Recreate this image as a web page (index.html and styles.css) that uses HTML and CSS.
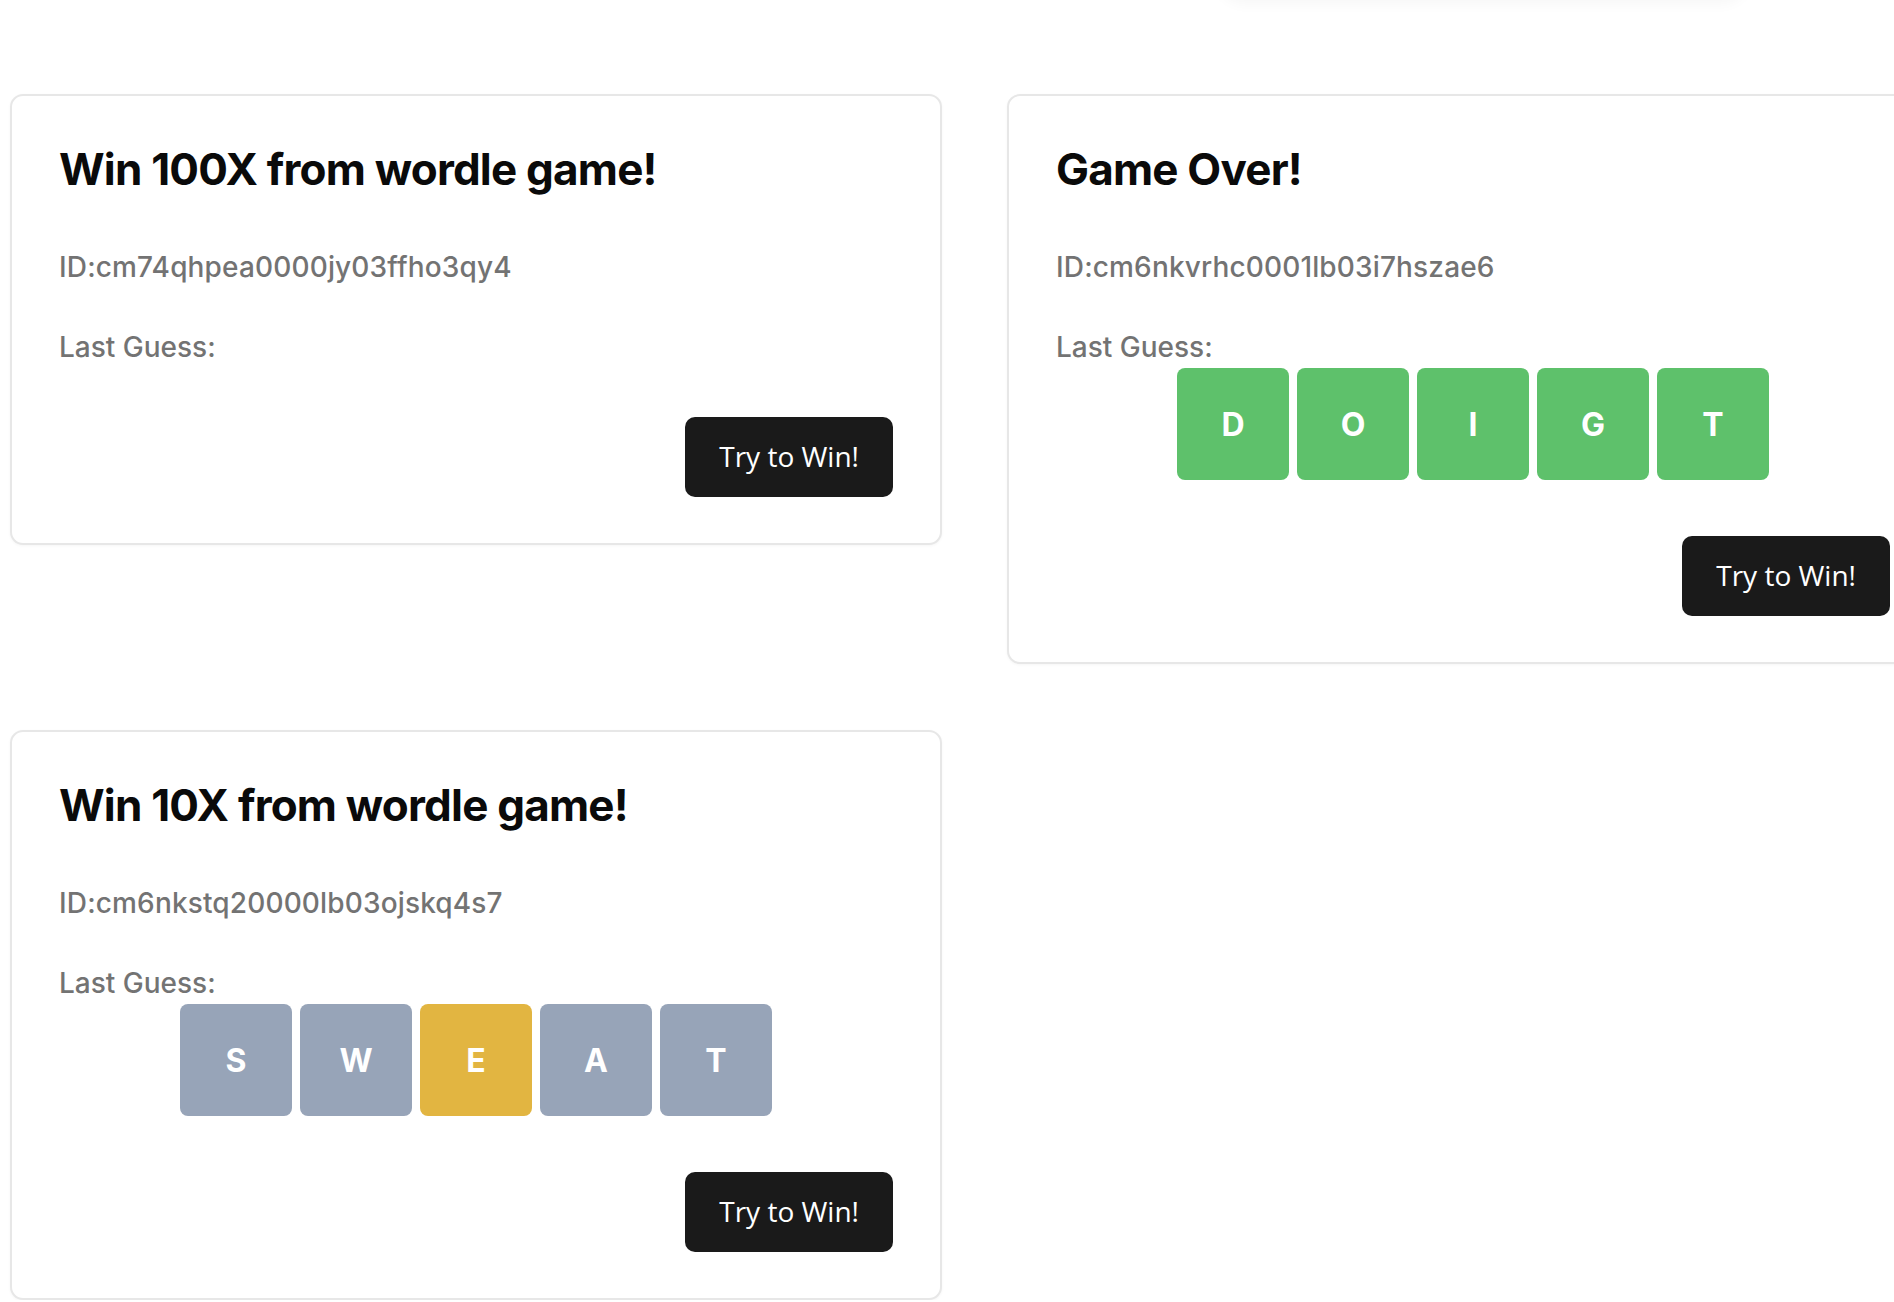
FILE: index.html
```html
<!DOCTYPE html>
<html lang="en">
<head>
<meta charset="utf-8">
<title>Wordle games</title>
<link rel="stylesheet" href="styles.css">
</head>
<body>
<div class="topbar-shadow"></div>
<main class="games">
  <section class="card">
    <h2 class="card-title">Win 100X from wordle game!</h2>
    <p class="card-id">ID:cm74qhpea0000jy03ffho3qy4</p>
    <p class="card-label">Last Guess:</p>
    <div class="card-actions card-actions-empty">
      <button class="btn-try">Try to Win!</button>
    </div>
  </section>

  <section class="card">
    <h2 class="card-title">Game Over!</h2>
    <p class="card-id">ID:cm6nkvrhc0001lb03i7hszae6</p>
    <p class="card-label">Last Guess:</p>
    <div class="tiles">
      <span class="tile tile-green">D</span>
      <span class="tile tile-green">O</span>
      <span class="tile tile-green">I</span>
      <span class="tile tile-green">G</span>
      <span class="tile tile-green">T</span>
    </div>
    <div class="card-actions">
      <button class="btn-try">Try to Win!</button>
    </div>
  </section>

  <section class="card">
    <h2 class="card-title">Win 10X from wordle game!</h2>
    <p class="card-id">ID:cm6nkstq20000lb03ojskq4s7</p>
    <p class="card-label">Last Guess:</p>
    <div class="tiles">
      <span class="tile tile-gray">S</span>
      <span class="tile tile-gray">W</span>
      <span class="tile tile-yellow">E</span>
      <span class="tile tile-gray">A</span>
      <span class="tile tile-gray">T</span>
    </div>
    <div class="card-actions">
      <button class="btn-try">Try to Win!</button>
    </div>
  </section>
</main>
</body>
</html>
```
FILE: styles.css
```css
html {
  overflow: hidden;
}
body {
  margin: 0;
  background: #ffffff;
  font-family: Inter, "Noto Sans", "Liberation Sans", sans-serif;
  color: #0a0a0a;
  position: relative;
}
.topbar-shadow {
  position: absolute;
  left: 1217px;
  top: -60px;
  width: 532px;
  height: 58px;
  border-radius: 28px;
  background: #ffffff;
  box-shadow: 0 6px 14px rgba(0, 0, 0, 0.035);
}
.games {
  display: grid;
  grid-template-columns: 932px 932px;
  column-gap: 65px;
  row-gap: 66px;
  align-items: start;
  padding: 94px 0 0 10px;
}
.card {
  box-sizing: border-box;
  border: 2px solid #e7e7e7;
  border-radius: 13px;
  padding: 47px 47px 46px;
  background: #ffffff;
  box-shadow: 0 1px 3px rgba(0, 0, 0, 0.04);
}
.card-title {
  margin: 0;
  font-size: 44px;
  line-height: 53px;
  font-weight: 700;
  letter-spacing: -0.8px;
  color: #0a0a0a;
}
.card-id {
  margin: 53px 0 0;
  font-size: 28px;
  line-height: 36px;
  font-weight: 500;
  letter-spacing: 0.15px;
  color: #737373;
}
.card-label {
  margin: 44px 0 0;
  font-size: 28px;
  line-height: 36px;
  font-weight: 500;
  color: #737373;
}
.tiles {
  display: flex;
  justify-content: center;
  gap: 8px;
  margin-top: 3px;
}
.tile {
  width: 112px;
  height: 112px;
  border-radius: 8px;
  display: flex;
  align-items: center;
  justify-content: center;
  color: #ffffff;
  font-size: 32px;
  font-weight: 700;
}
.tile-green { background: #5ec16b; }
.tile-gray { background: #97a4b8; }
.tile-yellow { background: #e2b541; }
.card-actions {
  display: flex;
  justify-content: flex-end;
  margin-top: 56px;
}
.card-actions-empty {
  margin-top: 52px;
}
.btn-try {
  box-sizing: border-box;
  height: 80px;
  padding: 0 34px 3px;
  border: none;
  border-radius: 10px;
  background: #1a1a1a;
  color: #ffffff;
  font-family: "Open Sans", "Noto Sans", sans-serif;
  font-size: 28px;
  font-weight: 400;
  cursor: pointer;
}
```
